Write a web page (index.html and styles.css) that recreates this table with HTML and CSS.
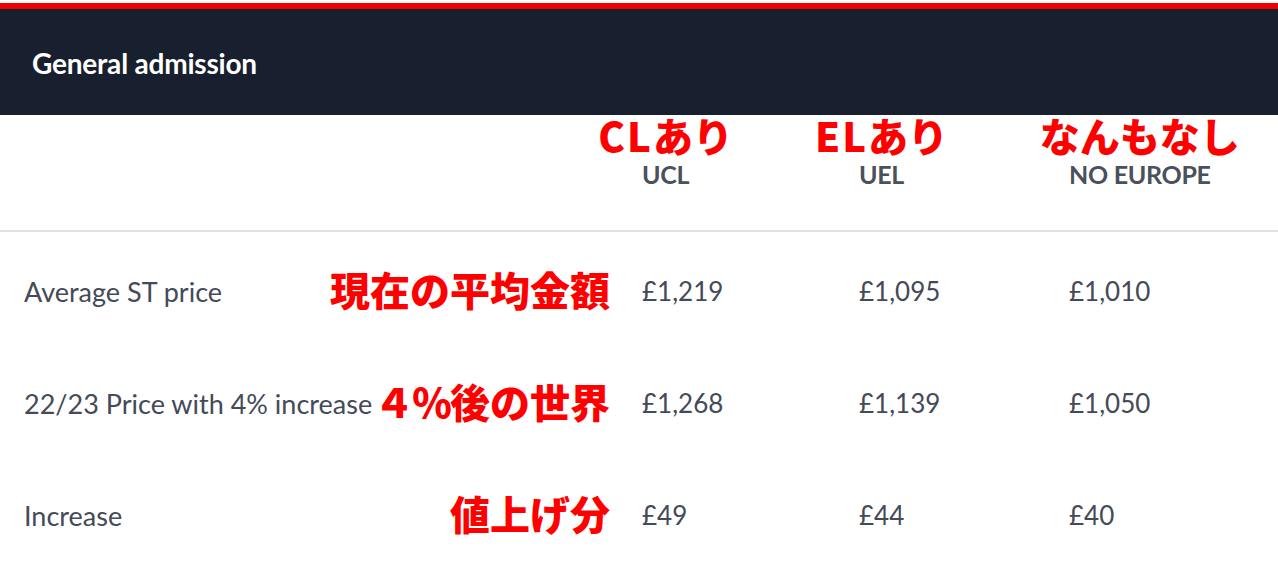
FILE: index.html
```html
<!DOCTYPE html>
<html lang="en">
<head>
<meta charset="utf-8">
<title>General admission</title>
<link rel="stylesheet" href="styles.css">
</head>
<body>
<div class="accent"></div>
<header class="section-head">
  <h2 class="section-title">General admission</h2>
</header>
<div class="price-table">
  <div class="row row-head">
    <div class="cell cell-label"></div>
    <div class="cell cell-col"><span class="colname">UCL<span class="note note-col"><span class="latin">CL</span>あり</span></span></div>
    <div class="cell cell-col"><span class="colname">UEL<span class="note note-col"><span class="latin">EL</span>あり</span></span></div>
    <div class="cell cell-col"><span class="colname">NO EUROPE<span class="note note-col">なんもなし</span></span></div>
  </div>
  <div class="body">
    <div class="row">
      <div class="cell cell-label"><span class="label">Average ST price</span><span class="note note-row">現在の平均金額</span></div>
      <div class="cell price">£1,219</div>
      <div class="cell price">£1,095</div>
      <div class="cell price">£1,010</div>
    </div>
    <div class="row">
      <div class="cell cell-label"><span class="label">22/23 Price with 4% increase</span><span class="note note-row"><span class="tight">４％</span>後の世界</span></div>
      <div class="cell price">£1,268</div>
      <div class="cell price">£1,139</div>
      <div class="cell price">£1,050</div>
    </div>
    <div class="row">
      <div class="cell cell-label"><span class="label">Increase</span><span class="note note-row">値上げ分</span></div>
      <div class="cell price">£49</div>
      <div class="cell price">£44</div>
      <div class="cell price">£40</div>
    </div>
  </div>
</div>
</body>
</html>
```

FILE: styles.css
```css
* { box-sizing: border-box; }

html, body {
  margin: 0;
  padding: 0;
  background: #ffffff;
}

body {
  font-family: Lato, "Noto Sans CJK JP", sans-serif;
  color: #444a57;
  overflow: hidden;
}

.accent {
  margin-top: 3px;
  height: 6px;
  background: #f20000;
}

.section-head {
  height: 106px;
  background: #181f2e;
  display: flex;
  align-items: center;
  padding-left: 32px;
}

.section-title {
  margin: 0;
  color: #ffffff;
  font-size: 28px;
  font-weight: 700;
  letter-spacing: -0.2px;
  padding-top: 2px;
}

.row {
  display: grid;
  grid-template-columns: 618px 217px 210px 1fr;
  padding-left: 24px;
}

.row-head {
  height: 117px;
  align-items: end;
  padding-bottom: 43px;
  border-bottom: 2px solid #e2e2e2;
}

.colname {
  position: relative;
  font-size: 25px;
  font-weight: 700;
  color: #4a505c;
  line-height: 1;
  letter-spacing: -0.3px;
}

.note {
  font-family: "Noto Sans CJK JP", sans-serif;
  font-weight: 900;
  color: #ff0000;
  white-space: nowrap;
  line-height: 1;
}

.note-col {
  position: absolute;
  left: 50%;
  bottom: 100%;
  transform: translateX(-50%);
  margin-bottom: 6px;
  font-size: 40px;
  line-height: 0.9;
  letter-spacing: 0;
}

.latin {
  letter-spacing: 2px;
}

.tight {
  letter-spacing: -2px;
}

.body {
  padding-top: 3px;
}

.body .row {
  height: 112px;
  align-items: center;
}

.cell-label {
  display: flex;
  align-items: center;
  justify-content: space-between;
  padding-right: 32px;
}

.label {
  font-size: 27px;
  white-space: nowrap;
}

.note-row {
  font-size: 40px;
  position: relative;
  top: -2px;
}

.price {
  font-size: 26px;
}
```
